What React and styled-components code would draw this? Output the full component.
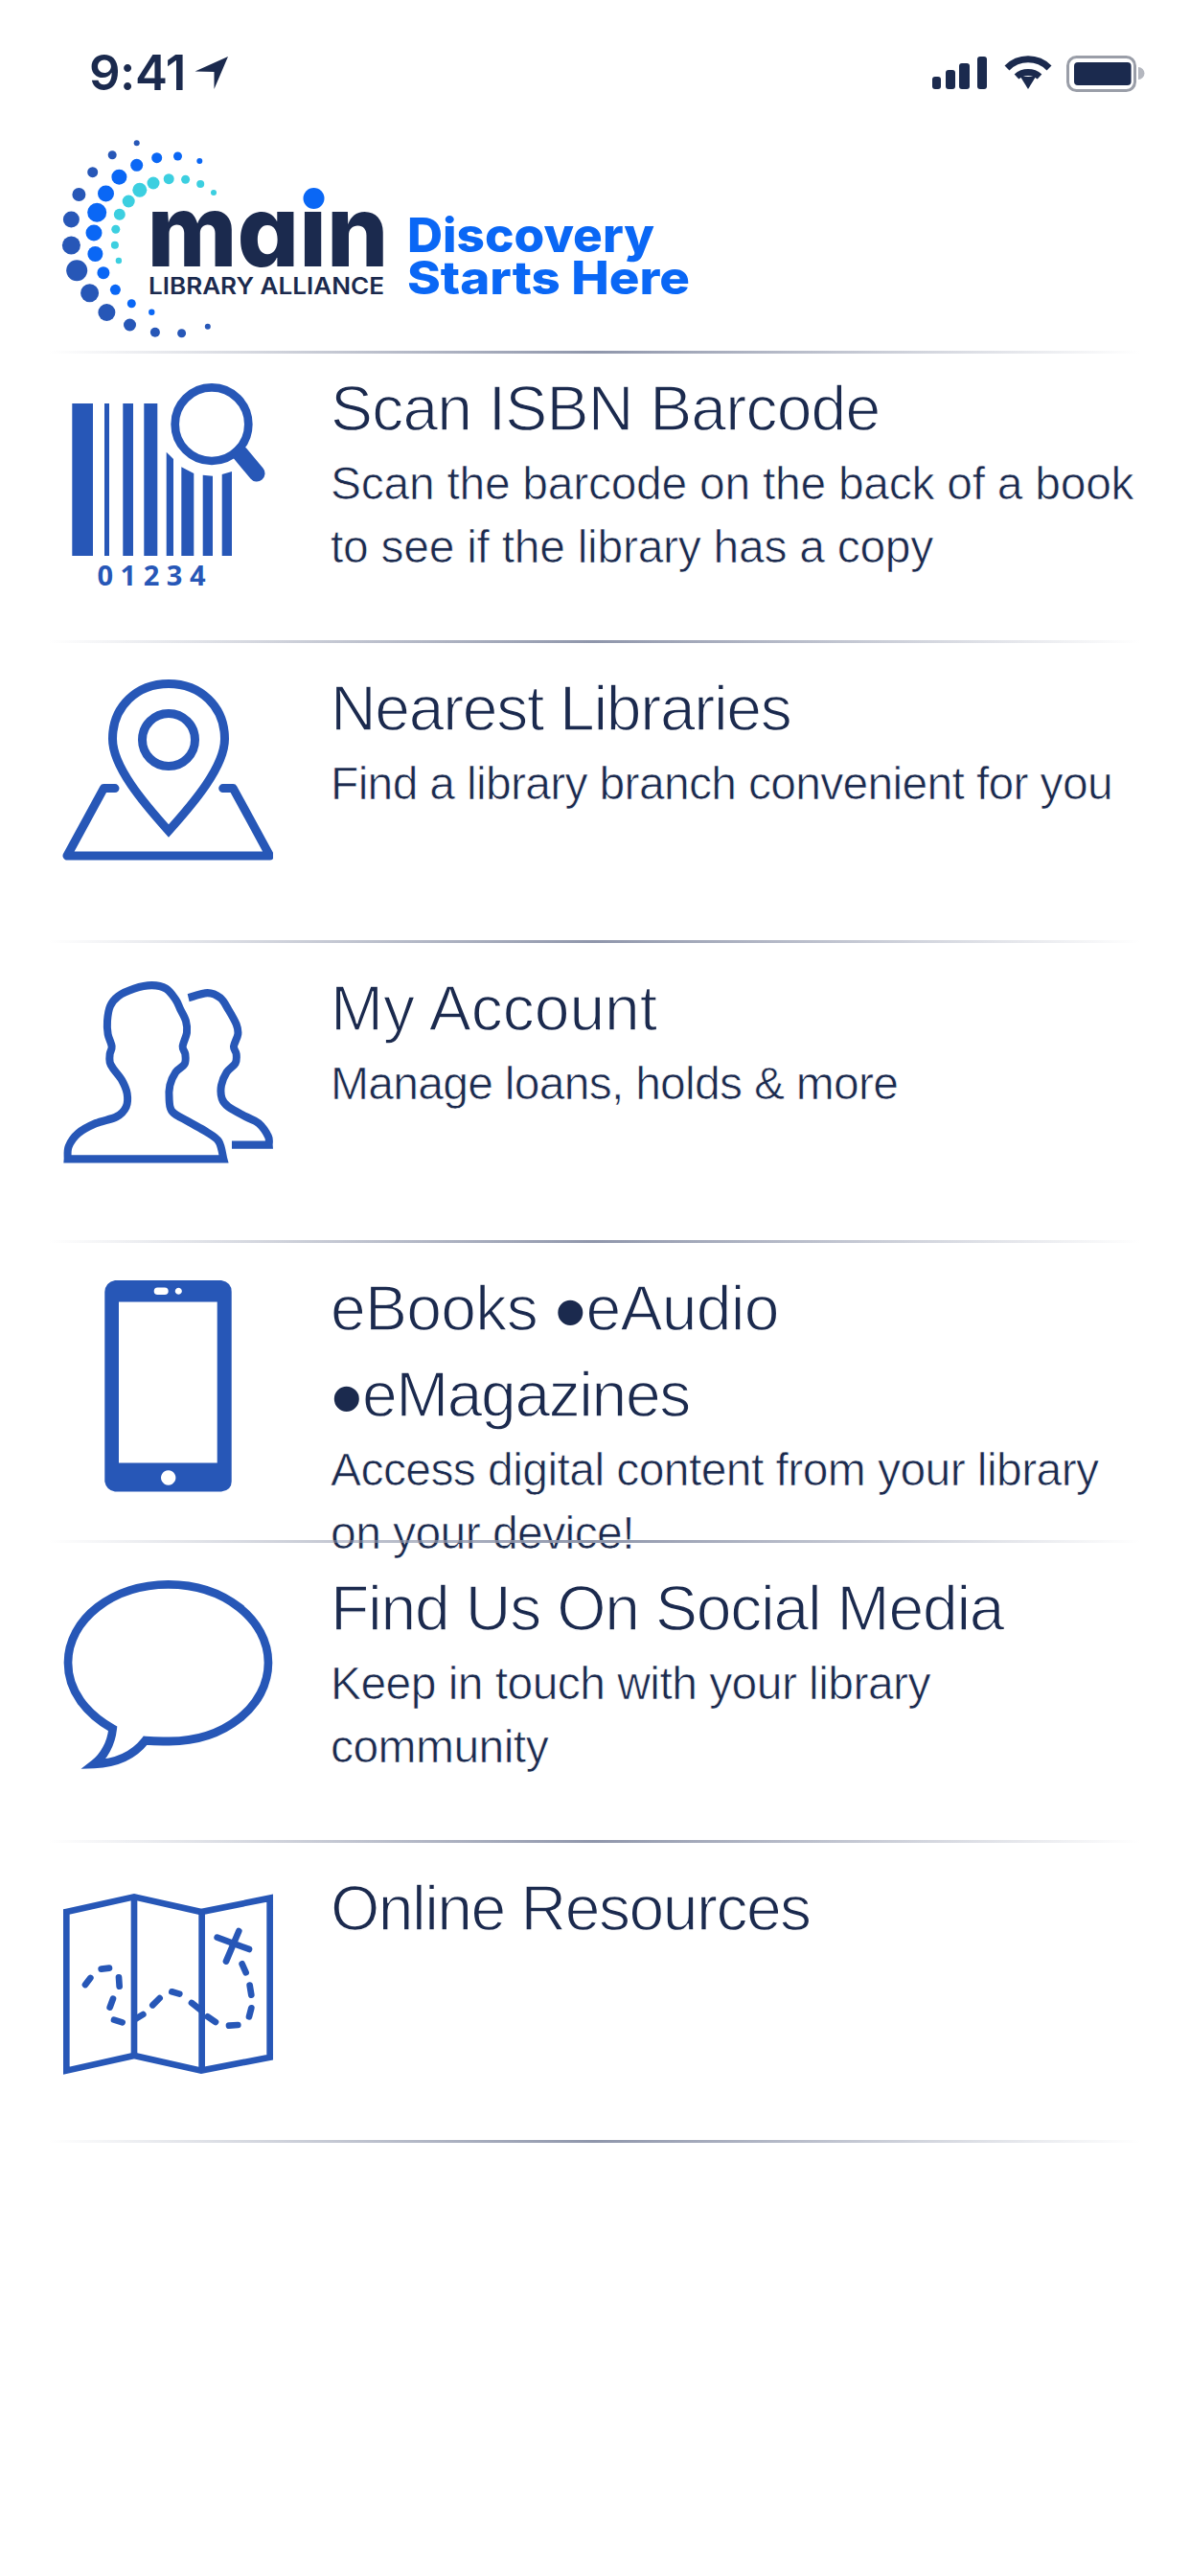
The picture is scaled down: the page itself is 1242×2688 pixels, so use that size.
import React from "react";
import styled, { createGlobalStyle } from "styled-components";

const INK = "#1b2a4e";
const ICON = "#2757b7";
const BLUE = "#0a67f5";
const CYAN = "#3ccfe0";

const Global = createGlobalStyle`
  html, body { margin: 0; padding: 0; background: #fff; }
  body { font-family: "Liberation Sans", Arial, sans-serif; color: ${INK}; }
`;

const Page = styled.div`
  width: 1242px;
  height: 2688px;
  overflow: hidden;
  background: #fff;
`;
const StatusBar = styled.div`
  height: 130px;
  display: flex;
  justify-content: space-between;
  align-items: flex-start;
  padding: 46px 44px 0 93px;
  box-sizing: border-box;
`;
const Clock = styled.div`
  display: flex;
  align-items: center;
  gap: 9px;
  font: 600 51px/60px Inter, "Liberation Sans", sans-serif;
  letter-spacing: -0.5px;
`;
const StatusIcons = styled.svg`
  display: block;
  margin-top: 6px;
  width: 233px;
  height: 50px;
`;
const Logo = styled.svg`
  display: block;
  width: 760px;
  height: 236px;
`;
const Separator = styled.div`
  position: relative;
  height: 3px;
  margin: 0 52px 0 50px;
  background: linear-gradient(90deg, rgba(143,150,171,0) 0%, #8f96ab 50%, rgba(143,150,171,0) 100%);
`;
const Row = styled.div`
  height: ${(p) => p.$height}px;
  display: flex;
  align-items: flex-start;
  gap: 60px;
  padding: ${(p) => p.$top}px 40px 0 65px;
  box-sizing: border-box;
`;
const IconSvg = styled.svg`
  flex: none;
  display: block;
  width: 220px;
  height: 300px;
  margin-top: ${(p) => -p.$top}px;
`;
const Body = styled.div`
  flex: 1;
  min-width: 0;
`;
const Title = styled.div`
  font-size: 66px;
  line-height: 90px;
  letter-spacing: ${(p) => p.$tracking}px;
  -webkit-text-stroke: 1.4px #fff;
`;
const Bullet = styled.span`
  font-size: 96px;
  line-height: 0;
  vertical-align: -14px;
  -webkit-text-stroke: 0;
`;
const TightWord = styled.span`
  letter-spacing: -1.4px;
`;
const Desc = styled.div`
  margin-top: 1px;
  font-size: 48px;
  line-height: 66px;
  letter-spacing: ${(p) => p.$tracking}px;
  -webkit-text-stroke: 0.7px #fff;
`;

const arc = [
  [142.7,149.3,3,ICON],[117.2,161.7,4.5,ICON],[96.7,179.7,5.5,ICON],[82.4,203,7,ICON],[74.4,229,8.5,ICON],[74.4,256,9.5,ICON],[80.2,282.3,11,ICON],[93.6,305.7,9.5,ICON],[111.4,326,9,ICON],[135.5,339,6.5,ICON],[161.9,346.7,5,ICON],[189.6,347.7,4.5,ICON],[216.8,340.7,3,ICON],
  [208.3,168,3,BLUE],[185.5,163,4.5,BLUE],[163.7,164.7,5.5,BLUE],[142.7,172.3,6.5,BLUE],[124.4,184.7,8,BLUE],[110.5,202,8.5,BLUE],[101.2,221.7,10,BLUE],[98,243,8.5,BLUE],[99.4,265,8,BLUE],[107.9,284.7,6.5,BLUE],[120.4,302.3,5.5,BLUE],[137.3,316.7,4.5,BLUE],[158.3,325.7,3.2,BLUE],
  [223,201,3,CYAN],[209.2,192,4,CYAN],[193.6,187.3,4.5,CYAN],[176.2,186.7,5.5,CYAN],[160,191,6.5,CYAN],[145.8,198.3,7.5,CYAN],[134.2,210,6.5,CYAN],[124.8,223.7,6,CYAN],[120.8,239.3,4.5,CYAN],[119.9,255.7,4,CYAN],[123.9,272,3.2,CYAN],
];

const smooth = (pts) => {
  const n = pts.length;
  const at = (i) => pts[Math.max(0, Math.min(n - 1, i))];
  let d = `M${pts[0][0]} ${pts[0][1]}`;
  for (let i = 0; i < n - 1; i++) {
    const [p0, p1, p2, p3] = [at(i - 1), at(i), at(i + 1), at(i + 2)];
    d += `C${p1[0] + (p2[0] - p0[0]) / 6} ${p1[1] + (p2[1] - p0[1]) / 6} ${p2[0] - (p3[0] - p1[0]) / 6} ${p2[1] - (p3[1] - p1[1]) / 6} ${p2[0]} ${p2[1]}`;
  }
  return d;
};

const person1 = [[92,1508],[95,1470],[125,1430],[180,1400],[245,1380],[275,1350],[278,1310],[262,1270],[235,1235],[224,1215],[224,1190],[230,1167],[218,1130],[216,1090],[225,1045],[250,1015],[300,992],[355,982],[400,992],[430,1025],[445,1055],[462,1090],[465,1125],[452,1167],[460,1190],[458,1220],[430,1245],[412,1285],[410,1330],[420,1365],[470,1395],[525,1425],[565,1455],[580,1508]];
const person2 = [[470,1020],[530,1005],[570,1020],[595,1055],[620,1100],[625,1130],[612,1167],[620,1190],[617,1218],[590,1245],[573,1285],[575,1325],[595,1350],[650,1380],[690,1400],[720,1440],[722,1465]];

const dashes = [[147,363,163,342],[197,314,222,311],[252,340,254,368],[234,407,224,434],[237,473,263,481],[305,470,328,456],[358,427,380,405],[418,385,442,392],[480,420,512,445],[530,463,555,480],[597,491,625,489],[660,463,667,436],[667,395,662,365],[650,325,638,298]];

const barcodeBars = [
  "75.3,421 97,421 97,580 75.3,580","109,421 114,421 114,580 109,580","128.3,421 139,421 139,580 128.3,580","150.3,421 164.3,421 164.3,580 150.3,580",
  "173.7,471.7 181,479 181,580 173.7,580","189.3,487.3 202.3,494 202.3,580 189.3,580","211.7,495.7 222,496.7 222,580 211.7,580","231.7,495 242,492 242,580 231.7,580",
];

const BarcodeIcon = ({ top }) => (
  <IconSvg viewBox="65 369 220 300" $top={top}>
    <g fill={ICON}>{barcodeBars.map((p) => <polygon key={p} points={p} />)}</g>
    <circle cx="221" cy="442.7" r="38.3" fill="none" stroke={ICON} strokeWidth="8.7" />
    <line x1="250.7" y1="473.3" x2="268" y2="494" stroke={ICON} strokeWidth="17" strokeLinecap="round" />
    <text x="101.5" y="611" fontFamily="'Open Sans', sans-serif" fontWeight="700" fontSize="29" fill={ICON} textLength="113" lengthAdjust="spacing">01234</text>
  </IconSvg>
);
const PinIcon = ({ top }) => (
  <IconSvg viewBox="65 671 220 300" $top={top}>
    <g fill="none" stroke={ICON} strokeWidth="9" strokeLinejoin="round" strokeLinecap="round">
      <path d="M176 867C150 838 117.5 800 117.5 771C117.5 737 143 713.5 176 713.5C209 713.5 234.5 737 234.5 771C234.5 800 202 838 176 867Z" strokeLinejoin="miter" />
      <circle cx="176" cy="772" r="27.5" />
      <polyline points="120,822.6 108.3,822.6 70,893 281.7,893 243.3,822.6 232.7,822.6" />
    </g>
  </IconSvg>
);
const PeopleIcon = ({ top }) => (
  <IconSvg viewBox="65 984 220 300" $top={top}>
    <g transform="translate(40 690) scale(.3333 .3444)" fill="none" stroke={ICON} strokeWidth="24">
      <path d={smooth(person1) + "Z"} />
      <path d={smooth(person2) + "L606 1465"} />
    </g>
  </IconSvg>
);
const PhoneIcon = ({ top }) => (
  <IconSvg viewBox="65 1297 220 300" $top={top}>
    <path fill={ICON} fillRule="evenodd" d="M120 1336H231Q241.7 1338 241.7 1348V1546Q241.7 1555 231 1556.6H120Q111 1555 109.3 1546V1348Q110 1338 120 1336ZM124 1358.6V1526.6H226.7V1358.6ZM164.5 1343.4A3.8 3.8 0 0 0 164.5 1351H171.9A3.8 3.8 0 0 0 171.9 1343.4ZM186.3 1343.7A3.5 3.5 0 1 0 186.31 1343.7ZM175.7 1534.3A7.7 7.7 0 1 0 175.71 1534.3Z" />
  </IconSvg>
);
const BubbleIcon = ({ top }) => (
  <IconSvg viewBox="65 1610 220 300" $top={top}>
    <g transform="translate(40 1320) scale(.3333 .3444)">
      <path fill="none" stroke={ICON} strokeWidth="26" strokeMiterlimit="8" d="M335 1441Q370 1444 410 1443C583 1443 720 1337 720 1205C720 1073 580 968 407 968C234 968 93 1073 93 1205C93 1290 150 1360 233 1405C228 1450 205 1490 175 1512C240 1510 295 1490 335 1441Z" />
    </g>
  </IconSvg>
);
const MapIcon = ({ top }) => (
  <IconSvg viewBox="65 1923 220 300" $top={top}>
    <g transform="translate(40 1950) scale(.3333)" fill="none" stroke={ICON} strokeWidth="20" strokeLinecap="round">
      <path d="M88 135L300 88L510 135L725 92V590L510 632L300 585L88 632Z" strokeLinejoin="miter" />
      <path d="M300 88V585M512 135V632" strokeLinecap="butt" />
      <path d="M560 215L660 252M628 195L588 290" />
      {dashes.map(([a, b, c, d]) => <line key={`${a}-${b}`} x1={a} y1={b} x2={c} y2={d} />)}
    </g>
  </IconSvg>
);

const rows = [
  { key: "scan", icon: BarcodeIcon, title: "Scan ISBN Barcode", desc: "Scan the barcode on the back of a book to see if the library has a copy", height: 299, top: 12, tt: -0.8, dt: -0.27 },
  { key: "near", icon: PinIcon, title: "Nearest Libraries", desc: "Find a library branch convenient for you", height: 310, top: 23, tt: -1.3, dt: -0.68 },
  { key: "acct", icon: PeopleIcon, title: "My Account", desc: "Manage loans, holds & more", height: 310, top: 23, tt: 0, dt: -0.72 },
  { key: "ebooks", icon: PhoneIcon, title: <>eBooks <Bullet>•</Bullet>eAudio <br /><Bullet>•</Bullet><TightWord>eMagazines</TightWord></>, desc: "Access digital content from your library on your device!", height: 310, top: 23, tt: -0.7, dt: -0.57 },
  { key: "social", icon: BubbleIcon, title: "Find Us On Social Media", desc: "Keep in touch with your library community", height: 310, top: 23, tt: -1.2, dt: -0.55 },
  { key: "online", icon: MapIcon, title: "Online Resources", desc: "", height: 310, top: 23, tt: -1.5, dt: 0 },
];

export default function App() {
  return (
    <Page>
      <Global />
      <StatusBar>
        <Clock>
          9:41
          <svg width="36" height="36" viewBox="204 62 36 36"><polygon points="239,63 204.5,78.5 224.5,79 224.5,97" fill={INK} /></svg>
        </Clock>
        <StatusIcons viewBox="965 52 233 50">
          <g fill={INK}>
            <rect x="973" y="80" width="9" height="13" rx="3" />
            <rect x="987" y="73" width="10" height="20" rx="3" />
            <rect x="1001" y="66" width="11" height="27" rx="3" />
            <rect x="1020" y="59" width="10" height="34" rx="3" />
            <polygon points="1073,93 1065,80 1081,80" />
          </g>
          <g fill="none" stroke={INK} strokeWidth="7">
            <path d="M1051 71A31 31 0 0 1 1095 71" />
            <path d="M1061 80A18 18 0 0 1 1085 80" />
          </g>
          <rect x="1114.5" y="59.5" width="70" height="35" rx="9" fill="none" stroke="#9a9ea8" strokeWidth="3" />
          <rect x="1121" y="65" width="59.6" height="24" rx="4" fill={INK} />
          <path d="M1188 70A6 6 0 0 1 1188 83Z" fill="#b4b7bf" />
        </StatusIcons>
      </StatusBar>
      <Logo viewBox="0 130 760 236">
        <defs>
          <clipPath id="noDot"><rect x="140" y="219" width="280" height="70" /></clipPath>
        </defs>
        {arc.map(([x, y, r, c]) => <circle key={`${x}-${y}`} cx={x} cy={y} r={r} fill={c} />)}
        <text x="153.5" y="277.7" clipPath="url(#noDot)" fontFamily="Inter, sans-serif" fontWeight="800" fontSize="104" fill={INK} textLength="252" lengthAdjust="spacingAndGlyphs" style={{ fontFeatureSettings: '"cv11"' }}>main</text>
        <circle cx="327.5" cy="207" r="11" fill={BLUE} />
        <text x="155" y="306.7" fontFamily="Inter, sans-serif" fontWeight="600" fontSize="24" fill={INK} textLength="246" lengthAdjust="spacingAndGlyphs">LIBRARY ALLIANCE</text>
        <text x="425" y="263" fontFamily="Inter, sans-serif" fontWeight="800" fontSize="49" fill={BLUE} textLength="258" lengthAdjust="spacingAndGlyphs">Discovery</text>
        <text x="425" y="306.7" fontFamily="Inter, sans-serif" fontWeight="800" fontSize="48" fill={BLUE} textLength="295" lengthAdjust="spacingAndGlyphs">Starts Here</text>
      </Logo>
      <Separator />
      {rows.map(({ key, icon: Icon, title, desc, height, top, tt, dt }) => (
        <React.Fragment key={key}>
          <Row $height={height} $top={top}>
            <Icon top={top} />
            <Body>
              <Title $tracking={tt}>{title}</Title>
              {desc && <Desc $tracking={dt}>{desc}</Desc>}
            </Body>
          </Row>
          <Separator />
        </React.Fragment>
      ))}
    </Page>
  );
}
